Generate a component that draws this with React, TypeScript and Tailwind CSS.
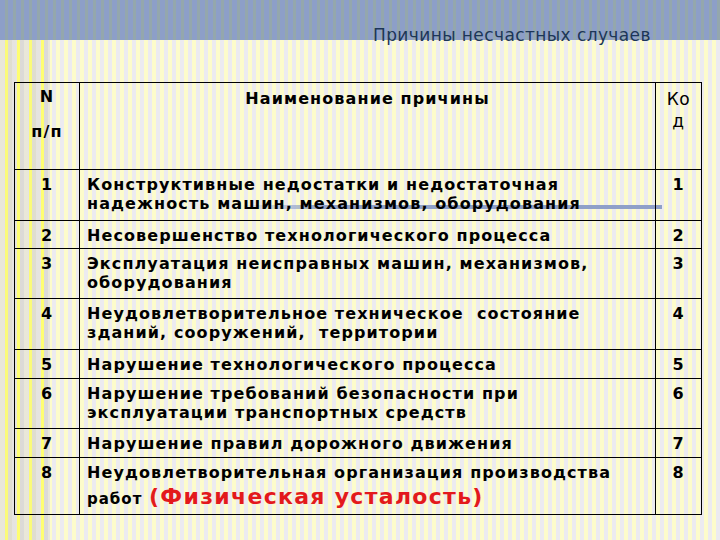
import React from "react";

interface Row {
  n: string;
  lines: React.ReactNode[];
  h: string;
}

const rows: Row[] = [
  {
    n: "1",
    lines: ["Конструктивные недостатки и недостаточная", "надежность машин, механизмов, оборудования"],
    h: "h-[51px]",
  },
  { n: "2", lines: ["Несовершенство технологического процесса"], h: "h-[28px]" },
  {
    n: "3",
    lines: ["Эксплуатация неисправных машин, механизмов,", "оборудования"],
    h: "h-[50px]",
  },
  {
    n: "4",
    lines: ["Неудовлетворительное техническое\u00a0 состояние", "зданий, сооружений,\u00a0 территории"],
    h: "h-[51px]",
  },
  { n: "5", lines: ["Нарушение технологического процесса"], h: "h-[29px]" },
  {
    n: "6",
    lines: ["Нарушение требований безопасности при", "эксплуатации транспортных средств"],
    h: "h-[50px]",
  },
  { n: "7", lines: ["Нарушение правил дорожного движения"], h: "h-[29px]" },
];

export default function App() {
  return (
    <div className="relative w-[720px] h-[540px] overflow-hidden font-['DejaVu_Sans',sans-serif] text-black bg-[repeating-linear-gradient(90deg,#fdfccb_0px,#fdfccb_4px,#ecebf0_4px,#ecebf0_8px)]">
      {/* left bright stripes */}
      <div className="absolute left-0 top-[40px] w-[50px] h-[500px] bg-[repeating-linear-gradient(90deg,#e4e2dc_0px,#e4e2dc_5px,#ffff5a_5px,#ffff5a_8px,#d8d6d0_8px,#d8d6d0_12px)] opacity-80" />
      {/* decorative bar */}
      <div className="absolute left-[240px] top-[205px] w-[422px] h-[4px] bg-[linear-gradient(90deg,rgba(143,160,200,0)_0%,#8fa0c8_20%,#8fa0c8_100%)]" />

      <div className="relative h-[40px] bg-[repeating-linear-gradient(90deg,#8d9fc8_0px,#8d9fc8_5px,#94a7ad_5px,#94a7ad_8px)]">
        <div className="pl-[373px] pt-[24px] text-[17px] leading-[22px] tracking-[0.4px] text-[#1c3657] whitespace-nowrap">
          Причины несчастных случаев
        </div>
      </div>

      <table className="relative ml-[14px] mt-[42px] w-[687px] border-collapse table-fixed text-[16px] font-bold tracking-[1.1px]">
        <colgroup>
          <col className="w-[65px]" />
          <col className="w-[576px]" />
          <col className="w-[46px]" />
        </colgroup>
        <tbody>
          <tr>
            <td className="h-[87px] border border-black align-top text-center pt-[4px]">
              <div className="leading-[20px]">N</div>
              <div className="leading-[20px] mt-[15px]">п/п</div>
            </td>
            <td className="border border-black align-top text-center pt-[6px] leading-[20px]">
              Наименование причины
            </td>
            <td className="border border-black align-top text-center pt-[5px] font-normal text-[17px] tracking-[0.5px] leading-[22px]">
              <div>Ко</div>
              <div>д</div>
            </td>
          </tr>
          {rows.map((r) => (
            <tr key={r.n}>
              <td className={`${r.h} border border-black align-top text-center pt-[5px] leading-[19px]`}>{r.n}</td>
              <td className="border border-black align-top pl-[7px] pt-[5px] leading-[19px] whitespace-nowrap">
                {r.lines.map((l, i) => (
                  <div key={i}>{l}</div>
                ))}
              </td>
              <td className="border border-black align-top text-center pt-[5px] leading-[19px]">{r.n}</td>
            </tr>
          ))}
          <tr>
            <td className="h-[57px] border border-black align-top text-center pt-[5px] leading-[19px]">8</td>
            <td className="border border-black align-top pl-[7px] pt-[5px] whitespace-nowrap">
              <div className="leading-[19px]">Неудовлетворительная организация производства</div>
              <div className="leading-[26px] mt-[2px]">
                <span className="text-[15px] tracking-[1px]">работ</span>{" "}
                <span className="text-[22px] text-[#e3191c] tracking-[1.3px]">(Физическая усталость)</span>
              </div>
            </td>
            <td className="border border-black align-top text-center pt-[5px] leading-[19px]">8</td>
          </tr>
        </tbody>
      </table>
    </div>
  );
}
